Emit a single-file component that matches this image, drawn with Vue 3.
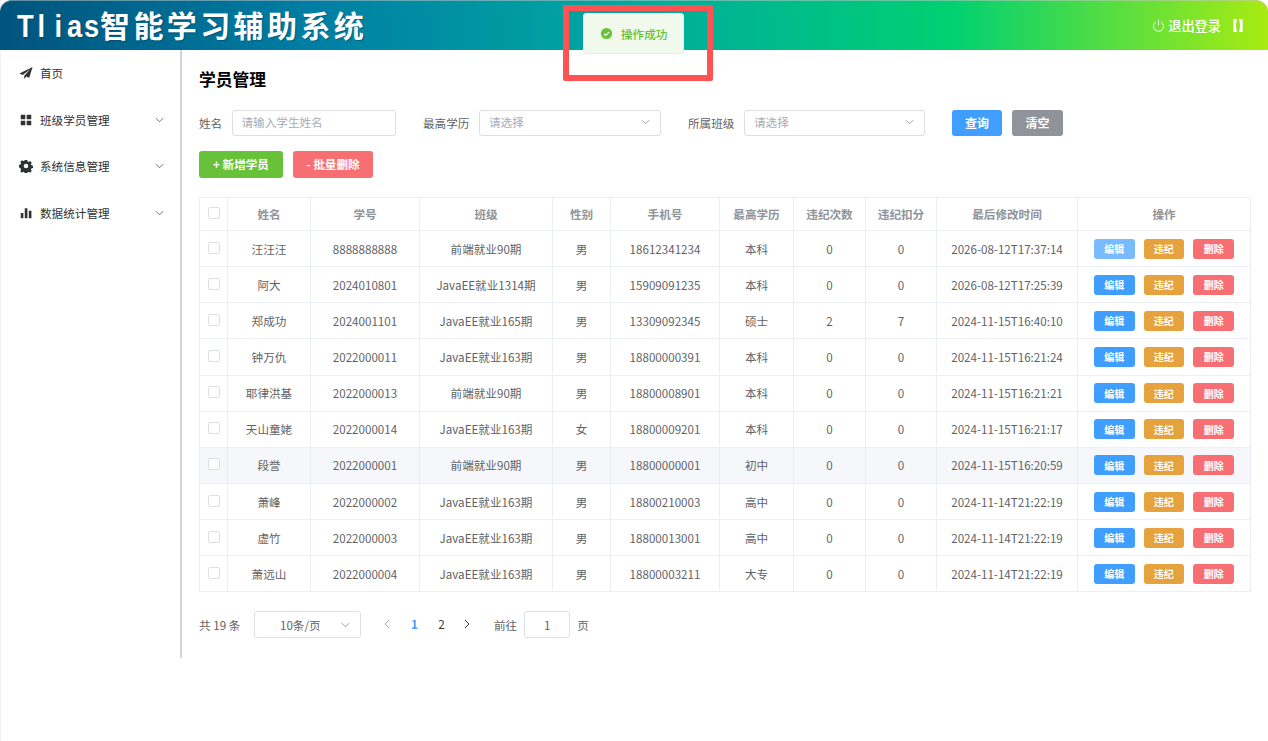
<template>
  <div class="page">
    <header class="top-bar">
      <div class="logo">
        <span v-for="c in 'Tlias'" :key="c" class="logo-en">{{ c }}</span>智能学习辅助系统
      </div>
      <div class="top-right">
        <svg class="power" viewBox="0 0 14 14" fill="none" stroke="#fff" stroke-width="1">
          <path d="M4.5 3a5.4 5.4 0 1 0 5 0" />
          <path d="M7 .8v6" />
        </svg>
        <span>退出登录</span>
        <svg class="tofu" viewBox="0 0 10 14" fill="#fff">
          <path d="M0 0h4Q1.6 7 4 14H0zM10 0H6q2.4 7 0 14h4z" />
        </svg>
      </div>
    </header>

    <div class="body-wrap">
      <aside class="side">
        <div v-for="m in menus" :key="m.name" class="menu-item">
          <svg class="menu-icon" viewBox="0 0 16 16" fill="#303133">
            <path v-if="m.icon === 'plane'" d="M15.5 1 .5 8.6l3.8 1.6L13 3.4 6 11.2v3.6l2.3-2.8 3.4 1.4z" />
            <path v-else-if="m.icon === 'grid'" d="M2 2h5.2v5.2H2zM8.8 2H14v5.2H8.8zM2 8.8h5.2V14H2zM8.8 8.8H14V14H8.8z" />
            <path v-else-if="m.icon === 'gear'" fill-rule="evenodd" d="M6.6 1h2.8l.4 1.9 1.2.5 1.6-1 2 2-1 1.6.5 1.2 1.9.4v2.8l-1.9.4-.5 1.2 1 1.6-2 2-1.6-1-1.2.5-.4 1.9H6.6l-.4-1.9-1.2-.5-1.6 1-2-2 1-1.6-.5-1.2L0 9.4V6.6l1.9-.4.5-1.2-1-1.6 2-2 1.6 1 1.2-.5zM8 5.4a2.6 2.6 0 1 0 0 5.2 2.6 2.6 0 0 0 0-5.2z" />
            <path v-else d="M2 8h3v6H2zM6.6 2.5h3V14h-3zM11.2 5.5h3V14h-3z" />
          </svg>
          <span class="menu-name">{{ m.name }}</span>
          <svg v-if="m.arrow" class="chev menu-chev" viewBox="0 0 10 6"><path d="M1 1l4 4 4-4" /></svg>
        </div>
      </aside>

      <main class="content">
        <h2 class="page-title">学员管理</h2>

        <div class="filter">
          <label class="f-label">姓名</label>
          <div class="box name-box"><span class="ph">请输入学生姓名</span></div>
          <label class="f-label edu-label">最高学历</label>
          <div class="box sel-box"><span class="ph">请选择</span><svg class="chev" viewBox="0 0 10 6"><path d="M1 1l4 4 4-4" /></svg></div>
          <label class="f-label edu-label">所属班级</label>
          <div class="box sel-box cls-box"><span class="ph">请选择</span><svg class="chev" viewBox="0 0 10 6"><path d="M1 1l4 4 4-4" /></svg></div>
          <button class="btn primary query">查询</button>
          <button class="btn gray clear">清空</button>
        </div>

        <div class="actions">
          <button class="btn success big">+ 新增学员</button>
          <button class="btn danger big">- 批量删除</button>
        </div>

        <table class="grid">
          <colgroup>
            <col v-for="(w, i) in colWidths" :key="i" :style="{ width: w + 'px' }" />
          </colgroup>
          <thead>
            <tr>
              <th><span class="check"></span></th>
              <th v-for="h in headers" :key="h">{{ h }}</th>
            </tr>
          </thead>
          <tbody>
            <tr v-for="(r, i) in rows" :key="r[1]" :class="{ hover: i === 6 }">
              <td><span class="check"></span></td>
              <td v-for="(c, j) in r" :key="j">{{ c }}</td>
              <td class="ops">
                <button class="mini primary" :class="{ light: i === 0 }">编辑</button>
                <button class="mini warn">违纪</button>
                <button class="mini danger">删除</button>
              </td>
            </tr>
          </tbody>
        </table>

        <div class="pager">
          <span class="total">共 19 条</span>
          <div class="box size-box"><span>10条/页</span><svg class="chev" viewBox="0 0 10 6"><path d="M1 1l4 4 4-4" /></svg></div>
          <svg class="nav prev" viewBox="0 0 6 10"><path d="M5 1 1 5l4 4" /></svg>
          <span class="pg active">1</span>
          <span class="pg">2</span>
          <svg class="nav next" viewBox="0 0 6 10"><path d="M1 1l4 4-4 4" /></svg>
          <span class="goto">前往</span>
          <div class="box jump">1</div>
          <span class="goto-end">页</span>
        </div>
      </main>
    </div>

    <div class="toast">
      <svg class="ok" viewBox="0 0 14 14">
        <circle cx="7" cy="7" r="6" fill="#67c23a" />
        <path d="M4.2 7.2 6.2 9l3.6-3.6" fill="none" stroke="#f0f9eb" stroke-width="1.3" />
      </svg>
      <span>操作成功</span>
    </div>
    <div class="mark"></div>
  </div>
</template>

<script setup>
const menus = [
  { name: '首页', icon: 'plane', arrow: false },
  { name: '班级学员管理', icon: 'grid', arrow: true },
  { name: '系统信息管理', icon: 'gear', arrow: true },
  { name: '数据统计管理', icon: 'bars', arrow: true },
]

const headers = ['姓名', '学号', '班级', '性别', '手机号', '最高学历', '违纪次数', '违纪扣分', '最后修改时间', '操作']
const colWidths = [28, 83, 109, 133, 58, 109, 74, 72, 71, 141, 173]

const rows = [
  ['汪汪汪', '8888888888', '前端就业90期', '男', '18612341234', '本科', '0', '0', '2026-08-12T17:37:14'],
  ['阿大', '2024010801', 'JavaEE就业1314期', '男', '15909091235', '本科', '0', '0', '2026-08-12T17:25:39'],
  ['郑成功', '2024001101', 'JavaEE就业165期', '男', '13309092345', '硕士', '2', '7', '2024-11-15T16:40:10'],
  ['钟万仇', '2022000011', 'JavaEE就业163期', '男', '18800000391', '本科', '0', '0', '2024-11-15T16:21:24'],
  ['耶律洪基', '2022000013', '前端就业90期', '男', '18800008901', '本科', '0', '0', '2024-11-15T16:21:21'],
  ['天山童姥', '2022000014', 'JavaEE就业163期', '女', '18800009201', '本科', '0', '0', '2024-11-15T16:21:17'],
  ['段誉', '2022000001', '前端就业90期', '男', '18800000001', '初中', '0', '0', '2024-11-15T16:20:59'],
  ['萧峰', '2022000002', 'JavaEE就业163期', '男', '18800210003', '高中', '0', '0', '2024-11-14T21:22:19'],
  ['虚竹', '2022000003', 'JavaEE就业163期', '男', '18800013001', '高中', '0', '0', '2024-11-14T21:22:19'],
  ['萧远山', '2022000004', 'JavaEE就业163期', '男', '18800003211', '大专', '0', '0', '2024-11-14T21:22:19'],
]
</script>

<style>
html,
body {
  margin: 0;
  background: #fff;
}
</style>

<style scoped>
.page {
  position: relative;
  width: 1268px;
  height: 741px;
  overflow: hidden;
  font-family: "Noto Sans CJK SC", "Noto Sans", sans-serif;
  font-size: 11.6px;
  color: #606266;
  background: #fff;
  box-shadow: inset 1px 0 0 #f2f2f2;
}

.top-bar {
  height: 50px;
  display: flex;
  align-items: center;
  justify-content: space-between;
  padding: 0 25px 0 16px;
  border-radius: 12px 12px 0 0;
  background: linear-gradient(to right, #00547d, #007fa4, #00aaa0, #00d072, #a8eb12);
  box-shadow: inset 0 1px 0 rgba(200, 200, 200, 0.5);
  color: #fff;
}

.logo {
  font-size: 30px;
  font-weight: 700;
  letter-spacing: 3.4px;
  line-height: 50px;
  white-space: nowrap;
  text-shadow: 1px 1px 1px rgba(0, 40, 70, 0.35);
}

.logo-en {
  display: inline-block;
  width: 16.8px;
  text-align: center;
  font-family: "Liberation Sans", sans-serif;
  font-size: 31px;
  letter-spacing: 0;
  transform: scaleX(0.88);
}

.top-right {
  display: flex;
  align-items: center;
  font-size: 13.2px;
  font-weight: 500;
}

.power {
  width: 13px;
  height: 13px;
  margin-right: 3px;
}

.tofu {
  width: 10px;
  height: 13px;
  margin-left: 12px;
}

.body-wrap {
  display: flex;
  align-items: flex-start;
}

.side {
  width: 180px;
  height: 608px;
  border-right: 2px solid #d3d4d8;
  flex: none;
}

.menu-item {
  box-sizing: border-box;
  height: 46.7px;
  display: flex;
  align-items: center;
  padding: 0 16px 2px 18.5px;
  color: #303133;
}

.menu-item:first-child {
  height: 47.2px;
}

.menu-icon {
  width: 14px;
  height: 14px;
  margin-right: 7.5px;
  flex: none;
}

.menu-name {
  flex: 1;
}

.chev {
  width: 9px;
  height: 6px;
  fill: none;
  stroke: #909399;
  stroke-width: 1;
}

.menu-chev {
  stroke: #606266;
}

.content {
  flex: 1;
  min-width: 0;
  padding: 0 17px;
}

.page-title {
  margin: 18px 0 0;
  font-size: 16.8px;
  line-height: 22px;
  font-weight: 700;
  color: #000;
}

.filter {
  display: flex;
  align-items: center;
  margin-top: 20px;
  height: 26px;
}

.f-label {
  margin-right: 9.8px;
}

.box {
  box-sizing: border-box;
  height: 26px;
  border: 1px solid #dcdfe6;
  border-radius: 3px;
  display: flex;
  align-items: center;
  justify-content: space-between;
  background: #fff;
}

.ph {
  color: #a8abb2;
}

.name-box {
  width: 164px;
  padding: 0 8.5px 2px;
}

.sel-box {
  width: 182px;
  padding: 0 10px 2px 9px;
}

.cls-box {
  width: 181px;
}

.edu-label {
  margin-left: 27px;
  margin-right: 9.6px;
}

.btn {
  box-sizing: border-box;
  border: none;
  border-radius: 3px;
  color: #fff;
  font-family: inherit;
  font-size: 11.6px;
  font-weight: 700;
  height: 26px;
  padding: 0 0 2px;
}

.primary {
  background: #409eff;
}

.gray {
  background: #909399;
}

.success {
  background: #67c23a;
}

.danger {
  background: #f76f72;
}

.warn {
  background: #e6a23c;
}

.query {
  width: 50px;
  margin-left: 27px;
  font-size: 12px;
}

.clear {
  width: 51px;
  margin-left: 10px;
  font-size: 12px;
}

.actions {
  display: flex;
  gap: 10px;
  margin-top: 15px;
}

.big {
  height: 27px;
}

.big.success {
  width: 84px;
}

.big.danger {
  width: 80px;
}

.grid {
  table-layout: fixed;
  width: 1051px;
  margin-top: 19px;
  border-collapse: collapse;
  border: 1px solid #ebeef5;
}

th,
td {
  border: 1px solid #ebeef5;
  text-align: center;
  padding: 0;
  white-space: nowrap;
}

th {
  height: 32px;
  font-weight: 700;
  color: #909399;
}

td {
  height: 35.15px;
}

tr.hover td {
  background: #f5f7fa;
}

.check {
  display: block;
  box-sizing: border-box;
  width: 12px;
  height: 12px;
  margin: 0 auto 2px;
  border: 1px solid #dcdfe6;
  border-radius: 2px;
  background: #fff;
}

.ops {
  font-size: 0;
}

.mini {
  border: none;
  border-radius: 3px;
  width: 41px;
  height: 20px;
  padding: 0;
  margin: 0 4.5px;
  color: #fff;
  font-family: inherit;
  font-size: 10px;
  font-weight: 700;
  vertical-align: middle;
}

.mini.warn {
  width: 40px;
  margin-right: 5px;
}

.light {
  background: #79bbff;
}

.pager {
  display: flex;
  align-items: center;
  margin-top: 19px;
  height: 27px;
}

.total {
  width: 55px;
}

.size-box {
  width: 107px;
  height: 27px;
  padding: 0 10px 0 25px;
}

.nav {
  width: 6px;
  height: 10px;
  fill: none;
  stroke-width: 1;
  margin-bottom: 2px;
}

.prev {
  stroke: #a8abb2;
  margin-left: 23px;
}

.next {
  stroke: #303133;
  margin-left: 9px;
}

.pg {
  width: 27px;
  text-align: center;
  font-weight: 400;
  color: #303133;
  padding-bottom: 2px;
}

.pg.active {
  margin-left: 11px;
  color: #409eff;
  font-weight: 700;
}

.goto {
  margin-left: 24px;
}

.jump {
  box-sizing: border-box;
  width: 46px;
  height: 27px;
  margin-left: 7px;
  justify-content: center;
}

.goto-end {
  margin-left: 7px;
}

.toast {
  position: absolute;
  left: 583px;
  top: 13px;
  box-sizing: border-box;
  width: 101px;
  height: 41px;
  display: flex;
  align-items: center;
  padding-left: 16px;
  border: 1px solid #e1f3d8;
  border-radius: 3px;
  background: #f0f9eb;
  color: #67c23a;
  font-weight: 500;
}

.ok {
  width: 13px;
  height: 13px;
  margin-right: 8px;
}

.mark {
  position: absolute;
  left: 563px;
  top: 5px;
  box-sizing: border-box;
  width: 150px;
  height: 76px;
  border: 6px solid #ff5353;
  border-radius: 2px;
}
</style>
